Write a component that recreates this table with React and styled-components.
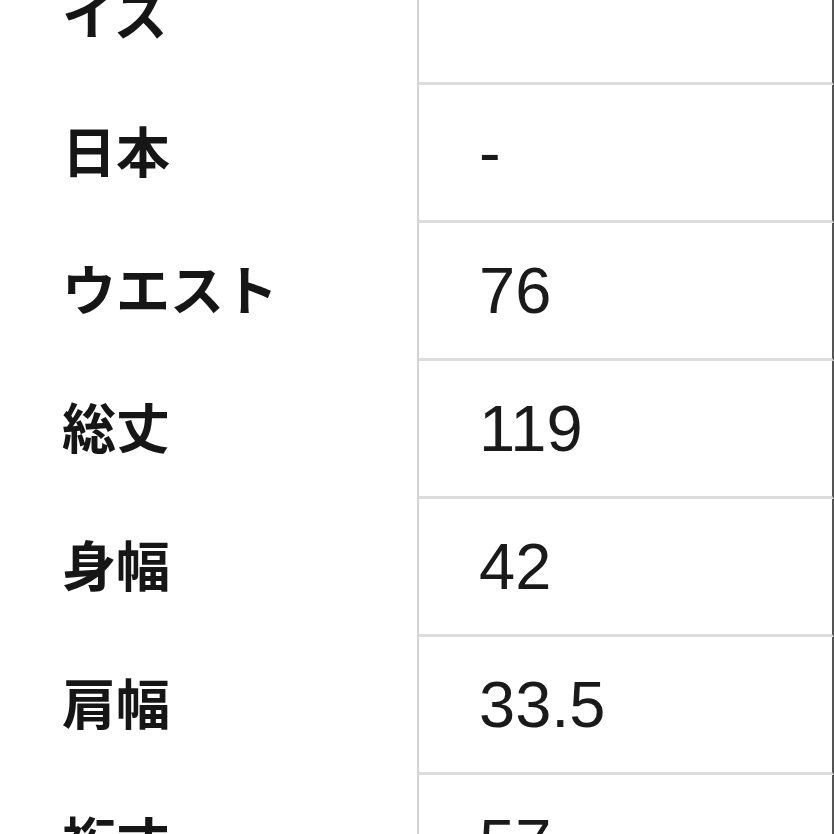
import React from "react";
import styled, { createGlobalStyle } from "styled-components";

const GlobalStyle = createGlobalStyle`
  html, body {
    margin: 0;
    padding: 0;
    background: #ffffff;
  }
`;

const Page = styled.div`
  width: 834px;
  height: 834px;
  overflow: hidden;
  background: #ffffff;
`;

// the sheet is a crop of a longer size chart, so the first row starts above the top
const Table = styled.div`
  display: flex;
  flex-direction: column;
  margin-top: -123px;
`;

const Row = styled.div`
  display: grid;
  grid-template-columns: 419px 415px;
  height: ${(p) => (p.$tall ? "208px" : "138px")};
`;

const Label = styled.div`
  display: flex;
  align-items: center;
  padding-left: 62px;
  padding-bottom: 8px;
  border-right: 2px solid #d3d3d3;
  font-family: "Noto Sans CJK JP", "Noto Sans", sans-serif;
  font-weight: 700;
  font-size: 54px;
  line-height: 70px;
  color: #161616;
  white-space: pre-line;
`;

const Value = styled.div`
  display: flex;
  align-items: center;
  padding-left: 60px;
  padding-bottom: ${(p) => (p.$tall ? "20px" : "0")};
  border-bottom: 3px solid #dcdcdc;
  border-right: 2px solid #555555;
  font-family: "Liberation Sans", Arial, sans-serif;
  font-size: 65px;
  color: #1a1a1a;
`;

const rows = [
  { label: "表記サ\nイズ", value: "M", tall: true },
  { label: "日本", value: "-" },
  { label: "ウエスト", value: "76" },
  { label: "総丈", value: "119" },
  { label: "身幅", value: "42" },
  { label: "肩幅", value: "33.5" },
  { label: "裄丈", value: "57" },
];

const App = () => {
  return (
    <Page>
      <GlobalStyle />
      <Table>
        {rows.map((r, i) => (
          <Row key={i} $tall={r.tall}>
            <Label>{r.label}</Label>
            <Value $tall={r.tall}>{r.value}</Value>
          </Row>
        ))}
      </Table>
    </Page>
  );
};

export default App;
